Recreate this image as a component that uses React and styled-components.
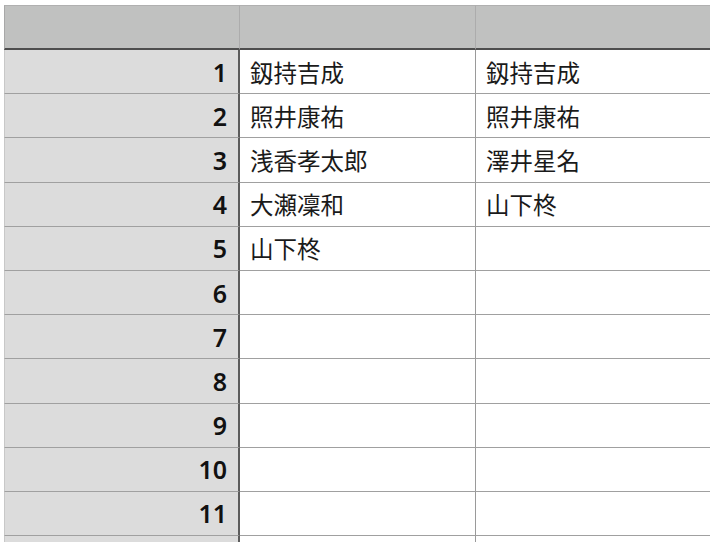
import React from "react";
import styled, { createGlobalStyle } from "styled-components";

const Global = createGlobalStyle`
  html, body { margin: 0; padding: 0; background: #ffffff; overflow: hidden; }
  body { font-family: "Noto Sans", "Noto Sans CJK JP", sans-serif; }
`;

const Sheet = styled.div`
  padding: 5px 0 0 4px;
  width: 900px;
  height: 537px;
  overflow: hidden;
`;

const Grid = styled.div`
  display: grid;
  grid-template-columns: 236px 236px 236px 200px;
  grid-auto-rows: 44.2px;
  grid-template-rows: 45px;
`;

const HeadCell = styled.div`
  background: #c0c1c0;
  border-bottom: 2px solid #4e4e4e;
  border-right: 1px solid #acacac;
  border-left: ${(p) => (p.$first ? "1px solid #a8a8a8" : "none")};
  border-top: 1px solid #b0b0b0;
  box-sizing: border-box;
`;

const RowHead = styled.div`
  background: #dcdcdc;
  border-bottom: 1px solid #a0a0a0;
  border-right: 2px solid #5c5c5c;
  border-left: 1px solid #c8c8c8;
  box-sizing: border-box;
  display: flex;
  align-items: center;
  justify-content: flex-end;
  padding-right: 11px;
  font-family: "Noto Sans", sans-serif;
  font-weight: 600;
  font-size: 25px;
  color: #111111;
`;

const Cell = styled.div`
  background: #ffffff;
  border-bottom: 1px solid #a0a0a0;
  border-right: 1px solid #9a9a9a;
  box-sizing: border-box;
  display: flex;
  align-items: center;
  padding-left: 10px;
  font-family: "Noto Sans CJK JP", sans-serif;
  font-size: 23.5px;
  color: #1a1a1a;
  white-space: nowrap;
`;

const rows = [
  ["釼持吉成", "釼持吉成"],
  ["照井康祐", "照井康祐"],
  ["浅香孝太郎", "澤井星名"],
  ["大瀬凜和", "山下柊"],
  ["山下柊", ""],
  ["", ""],
  ["", ""],
  ["", ""],
  ["", ""],
  ["", ""],
  ["", ""],
  ["", ""],
];

export default function App() {
  return (
    <>
      <Global />
      <Sheet>
        <Grid>
          <HeadCell $first />
          <HeadCell />
          <HeadCell />
          <HeadCell />
          {rows.map((r, i) => (
            <React.Fragment key={i}>
              <RowHead>{i < 11 ? i + 1 : ""}</RowHead>
              <Cell>{r[0]}</Cell>
              <Cell>{r[1]}</Cell>
              <Cell />
            </React.Fragment>
          ))}
        </Grid>
      </Sheet>
    </>
  );
}
